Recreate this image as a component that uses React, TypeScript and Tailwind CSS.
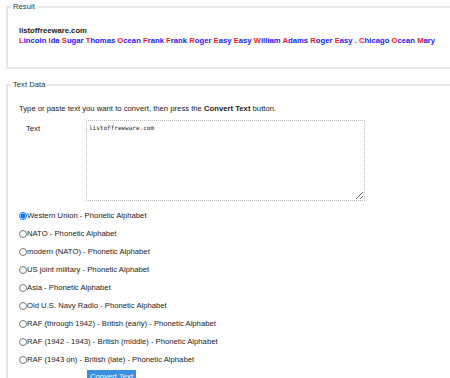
import { useState } from "react";

const words = [
  "Lincoln", "Ida", "Sugar", "Thomas", "Ocean", "Frank", "Frank", "Roger", "Easy", "Easy",
  "William", "Adams", "Roger", "Easy", ".", "Chicago", "Ocean", "Mary",
];

const alphabets = [
  "Western Union - Phonetic Alphabet",
  "NATO - Phonetic Alphabet",
  "modern (NATO) - Phonetic Alphabet",
  "US joint military - Phonetic Alphabet",
  "Asia - Phonetic Alphabet",
  "Old U.S. Navy Radio - Phonetic Alphabet",
  "RAF (through 1942) - British (early) - Phonetic Alphabet",
  "RAF (1942 - 1943) - British (middle) - Phonetic Alphabet",
  "RAF (1943 on) - British (late) - Phonetic Alphabet",
];

export default function App() {
  const [picked, setPicked] = useState(0);
  const [text, setText] = useState("listoffreeware.com");

  return (
    <div className="h-[378px] w-[450px] overflow-hidden bg-white font-['Liberation_Sans',Arial,sans-serif] text-[7.7px] text-[#222]">
      <fieldset className="ml-[6px] mt-[2px] w-[470px] border-2 border-[#e6e6e6] pb-[21px] pl-[11px] pt-[14px]">
        <legend className="ml-[-8px] px-[2px] leading-[10px] text-[#333]">Result</legend>
        <p className="font-bold leading-[10px] text-[#222]">{text}</p>
        <p className="font-bold leading-[10px]">
          {words.map((w, i) => (
            <span key={i}>
              <span className="text-[#ff1a1a]">{w.charAt(0)}</span>
              <span className="text-[#1a1aff]">{w.slice(1)}</span>{" "}
            </span>
          ))}
        </p>
      </fieldset>

      <fieldset className="ml-[6px] mt-[11px] w-[470px] border-2 border-[#e6e6e6] pb-4 pl-[11px] pt-[14px]">
        <legend className="ml-[-8px] px-[2px] leading-[10px] text-[#333]">Text Data</legend>
        <p className="leading-[10px]">
          Type or paste text you want to convert, then press the <b>Convert Text</b> button.
        </p>
        <div className="mt-[6px] flex">
          <label className="ml-[7px] w-[60px] pt-[4px] leading-[10px]">Text</label>
          <textarea
            value={text}
            onChange={(e) => setText(e.target.value)}
            className="h-[81px] w-[279px] resize border border-dotted border-[#b8b8b8] px-[2px] py-[3px] font-['DejaVu_Sans_Mono',monospace] text-[6px] leading-[7px] text-[#222] outline-none"
          />
        </div>
        <div className="mt-[6px] flex flex-col">
          {alphabets.map((a, i) => (
            <label key={a} className="flex h-[18px] items-center">
              <input
                type="radio"
                name="alpha"
                checked={picked === i}
                onChange={() => setPicked(i)}
                className="m-0 h-[8px] w-[8px]"
              />
              <span>{a}</span>
            </label>
          ))}
        </div>
        <button className="ml-[68px] mt-[1px] bg-[#3b8fe0] px-[3px] py-[2px] leading-[10px] text-white">
          Convert Text
        </button>
      </fieldset>
    </div>
  );
}
